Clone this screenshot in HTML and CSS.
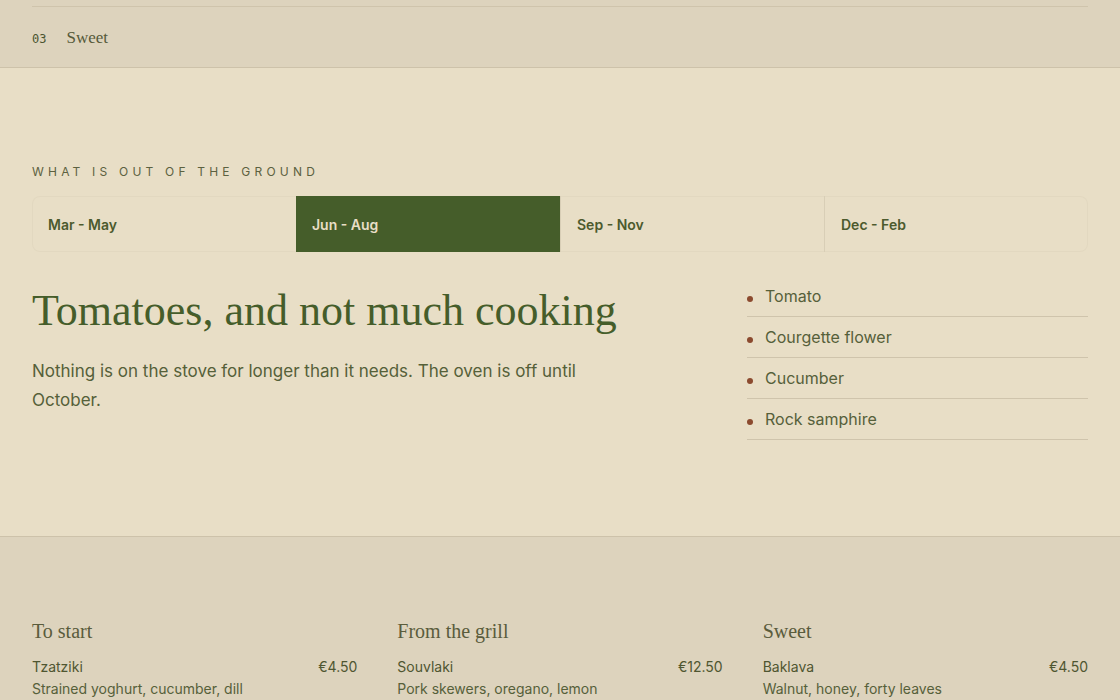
FILE: index.html
```html
<!DOCTYPE html>
<html lang="en">
<head>
<meta charset="utf-8">
<title>Seasonal menu</title>
<link rel="stylesheet" href="styles.css">
</head>
<body>
<section class="courses">
  <div class="course-row">
    <span class="course-num">03</span>
    <span class="course-name">Sweet</span>
  </div>
</section>

<section class="season">
  <p class="eyebrow">What is out of the ground</p>
  <div class="tabs">
    <button class="tab">Mar - May</button>
    <button class="tab active">Jun - Aug</button>
    <button class="tab">Sep - Nov</button>
    <button class="tab">Dec - Feb</button>
  </div>
  <div class="season-body">
    <div class="season-copy">
      <h1 class="season-title">Tomatoes, and not much cooking</h1>
      <p class="season-text">Nothing is on the stove for longer than it needs. The oven is off until October.</p>
    </div>
    <ul class="produce">
      <li class="produce-item">Tomato</li>
      <li class="produce-item">Courgette flower</li>
      <li class="produce-item">Cucumber</li>
      <li class="produce-item">Rock samphire</li>
    </ul>
  </div>
</section>

<section class="menu">
  <div class="menu-col">
    <h2 class="menu-heading">To start</h2>
    <div class="dish">
      <div class="dish-line"><span class="dish-name">Tzatziki</span><span class="dish-price">€4.50</span></div>
      <div class="dish-desc">Strained yoghurt, cucumber, dill</div>
    </div>
  </div>
  <div class="menu-col">
    <h2 class="menu-heading">From the grill</h2>
    <div class="dish">
      <div class="dish-line"><span class="dish-name">Souvlaki</span><span class="dish-price">€12.50</span></div>
      <div class="dish-desc">Pork skewers, oregano, lemon</div>
    </div>
  </div>
  <div class="menu-col">
    <h2 class="menu-heading">Sweet</h2>
    <div class="dish">
      <div class="dish-line"><span class="dish-name">Baklava</span><span class="dish-price">€4.50</span></div>
      <div class="dish-desc">Walnut, honey, forty leaves</div>
    </div>
  </div>
</section>
</body>
</html>
```

FILE: styles.css
```css
* { box-sizing: border-box; }
html, body { margin: 0; padding: 0; }
body {
  font-family: Inter, "Liberation Sans", sans-serif;
  color: #4f5631;
  background: #e8dec6;
  overflow: hidden;
}

.courses {
  background: #ddd3bd;
  padding: 6px 32px 0;
  border-bottom: 1px solid #cdc2aa;
}
.course-row {
  border-top: 1px solid #cfc4ac;
  height: 61px;
  display: flex;
  align-items: center;
  gap: 20px;
  padding-top: 2px;
}
.course-num {
  font-family: "DejaVu Sans Mono", monospace;
  font-size: 12px;
  color: #4a5530;
  padding-top: 1px;
}
.course-name {
  font-family: "Liberation Serif", serif;
  font-size: 17px;
  color: #565a3a;
}

.season {
  padding: 96px 32px 96px;
  border-bottom: 1px solid #cdc2aa;
  height: 469px;
}
.eyebrow {
  margin: 0 0 17px;
  font-size: 12px;
  letter-spacing: 4.2px;
  text-transform: uppercase;
  color: #5c6140;
  line-height: 15px;
}
.tabs {
  display: grid;
  grid-template-columns: repeat(4, 1fr);
  box-shadow: inset 0 0 0 1px #e2d8c0;
  border-radius: 8px;
  height: 56px;
}
.tab {
  font-family: Inter, "Liberation Sans", sans-serif;
  font-size: 14px;
  font-weight: 600;
  color: #4c5a2d;
  background: transparent;
  border: 0;
  border-left: 1px solid #d8ceb6;
  text-align: left;
  padding: 0 16px;
}
.tab:first-child { border-left: 0; }
.tab.active {
  background: #455d2a;
  color: #e8dec6;
  border-left: 0;
}

.season-body {
  display: flex;
  justify-content: space-between;
  margin-top: 30px;
}
.season-copy { width: 600px; padding-top: 1px; }
.season-title {
  margin: 0;
  font-family: "Liberation Serif", serif;
  font-weight: 400;
  font-size: 44px;
  line-height: 56px;
  color: #455d2a;
}
.season-text {
  margin: 18px 0 0;
  font-size: 17px;
  line-height: 29px;
  color: #556039;
}

.produce {
  list-style: none;
  margin: -6px 0 0;
  padding: 0;
  width: 341px;
}
.produce-item {
  position: relative;
  padding: 5px 0 5px 18px;
  height: 41px;
  line-height: 30px;
  font-size: 16px;
  color: #56603a;
  border-bottom: 1px solid #cfc4ac;
}
.produce-item::before {
  content: "";
  position: absolute;
  left: 0;
  top: 20px;
  width: 6px;
  height: 6px;
  border-radius: 50%;
  background: #8b4a2e;
}

.menu {
  background: #ddd3bd;
  padding: 81px 32px 0;
  display: grid;
  grid-template-columns: repeat(3, 1fr);
  column-gap: 40px;
  height: 200px;
}
.menu-heading {
  margin: 0 0 12px;
  font-family: "Liberation Serif", serif;
  font-weight: 400;
  font-size: 20px;
  line-height: 26px;
  color: #5a5c3c;
}
.dish-line {
  display: flex;
  justify-content: space-between;
  font-size: 14px;
  line-height: 22px;
  color: #4f5631;
}
.dish-desc {
  font-size: 14px;
  line-height: 22px;
  color: #56603a;
}
```
